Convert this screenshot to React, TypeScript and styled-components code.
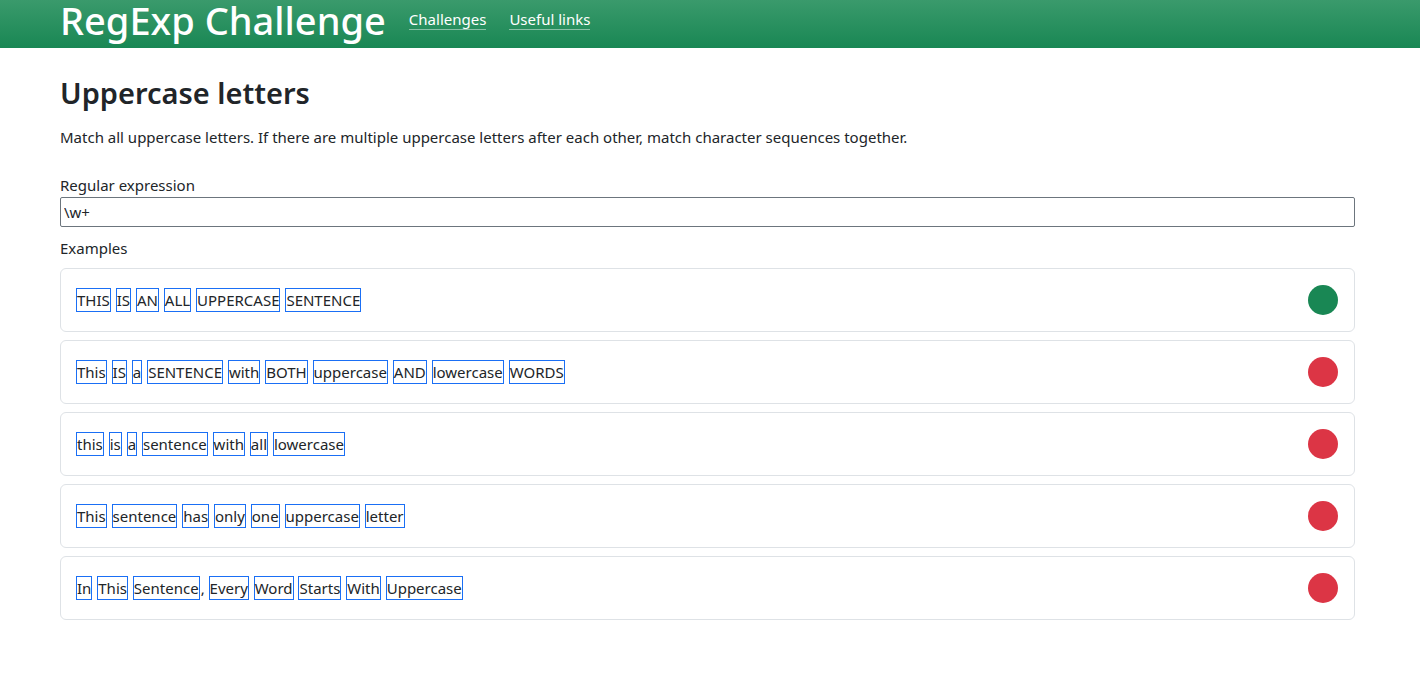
import React from "react";
import styled, { createGlobalStyle } from "styled-components";

const Global = createGlobalStyle`
  * { box-sizing: border-box; }
  body {
    margin: 0;
    font-family: "Segoe UI", "Noto Sans", "Open Sans", sans-serif;
    font-size: 15px;
    color: #212529;
    background: #fff;
  }
`;

const Header = styled.header`
  height: 48px;
  background: linear-gradient(180deg, #3a9a6c 0%, #198754 100%);
  display: flex;
  align-items: flex-start;
  padding: 0 60px;
  gap: 23px;
`;

const Brand = styled.div`
  color: #fff;
  font-size: 38px;
  font-weight: 500;
  line-height: 52px;
  margin-top: -6px;
`;

const Nav = styled.nav`
  display: flex;
  gap: 23px;
  align-items: center;
  padding-top: 10px;
`;

const NavLink = styled.a`
  color: #fff;
  font-size: 15px;
  text-decoration: none;
  border-bottom: 1px solid rgba(255, 255, 255, 0.45);
  line-height: 19px;
`;

const Main = styled.main`
  padding: 25px 65px 40px 60px;
`;

const Title = styled.h1`
  margin: 0 0 13px;
  font-size: 29px;
  font-weight: 600;
  line-height: 40px;
`;

const Desc = styled.p`
  margin: 0 0 26px;
  line-height: 22px;
`;

const Label = styled.div`
  line-height: 22px;
  margin-bottom: 1px;
`;

const Input = styled.input`
  display: block;
  width: 100%;
  height: 30px;
  border: 1px solid #6c757d;
  border-radius: 2px;
  padding: 0 3px;
  font: inherit;
  color: #212529;
  margin-bottom: 10px;
`;

const List = styled.div`
  display: flex;
  flex-direction: column;
  gap: 8px;
  margin-top: 9px;
`;

const Card = styled.div`
  height: 64px;
  border: 1px solid #dee2e6;
  border-radius: 6px;
  display: flex;
  align-items: center;
  justify-content: space-between;
  padding: 0 16px 0 15px;
`;

const Sentence = styled.div`
  line-height: 22px;
  white-space: pre;
`;

const Match = styled.span`
  border: 1px solid #1a6ff5;
  padding: 1px 0;
  margin-right: 1px;
`;

const Dot = styled.div<{ $ok: boolean }>`
  width: 30px;
  height: 30px;
  border-radius: 50%;
  background: ${(p) => (p.$ok ? "#198754" : "#dc3545")};
`;

const examples = [
  { text: "THIS IS AN ALL UPPERCASE SENTENCE", ok: true },
  { text: "This IS a SENTENCE with BOTH uppercase AND lowercase WORDS", ok: false },
  { text: "this is a sentence with all lowercase", ok: false },
  { text: "This sentence has only one uppercase letter", ok: false },
  { text: "In This Sentence, Every Word Starts With Uppercase", ok: false },
];

function highlight(text: string) {
  const parts: React.ReactNode[] = [];
  const re = /\w+/g;
  let last = 0;
  let m: RegExpExecArray | null;
  let k = 0;
  while ((m = re.exec(text))) {
    if (m.index > last) parts.push(text.slice(last, m.index));
    parts.push(<Match key={k++}>{m[0]}</Match>);
    last = m.index + m[0].length;
  }
  if (last < text.length) parts.push(text.slice(last));
  return parts;
}

export default function App() {
  return (
    <>
      <Global />
      <Header>
        <Brand>RegExp Challenge</Brand>
        <Nav>
          <NavLink href="#">Challenges</NavLink>
          <NavLink href="#">Useful links</NavLink>
        </Nav>
      </Header>
      <Main>
        <Title>Uppercase letters</Title>
        <Desc>
          Match all uppercase letters. If there are multiple uppercase letters after each other, match character sequences together.
        </Desc>
        <Label>Regular expression</Label>
        <Input defaultValue="\w+" />
        <Label>Examples</Label>
        <List>
          {examples.map((e, i) => (
            <Card key={i}>
              <Sentence>{highlight(e.text)}</Sentence>
              <Dot $ok={e.ok} />
            </Card>
          ))}
        </List>
      </Main>
    </>
  );
}
